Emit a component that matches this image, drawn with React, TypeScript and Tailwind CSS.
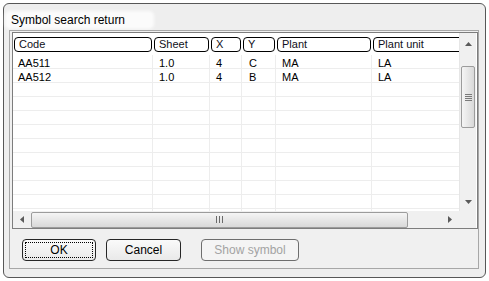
const columns = [
  { title: "Code", width: "w-[140px]", pad: "pl-[5px]" },
  { title: "Sheet", width: "w-[57px]", pad: "pl-[6px]" },
  { title: "X", width: "w-[32px]", pad: "pl-[6px]" },
  { title: "Y", width: "w-[34px]", pad: "pl-[7px]" },
  { title: "Plant", width: "w-[96px]", pad: "pl-[6px]" },
  { title: "Plant unit", width: "w-[110px]", pad: "pl-[6px]" },
];

const rows = [
  ["AA511", "1.0", "4", "C", "MA", "LA"],
  ["AA512", "1.0", "4", "B", "MA", "LA"],
  ["", "", "", "", "", ""],
  ["", "", "", "", "", ""],
  ["", "", "", "", "", ""],
  ["", "", "", "", "", ""],
  ["", "", "", "", "", ""],
  ["", "", "", "", "", ""],
  ["", "", "", "", "", ""],
  ["", "", "", "", "", ""],
  ["", "", "", "", "", ""],
  ["", "", "", "", "", ""],
];

function Arrow({ dir }: { dir: "up" | "down" | "left" | "right" }) {
  const pts = {
    up: "0,4 7,4 3.5,0",
    down: "0,0 7,0 3.5,4",
    left: "4,0 4,7 0,3.5",
    right: "0,0 0,7 4,3.5",
  }[dir];
  const vertical = dir === "up" || dir === "down";
  return (
    <svg width={vertical ? 7 : 4} height={vertical ? 4 : 7} viewBox={vertical ? "0 0 7 4" : "0 0 4 7"}>
      <polygon points={pts} fill="#5a5a5a" />
    </svg>
  );
}

function Button({ label, width, focused, disabled }: { label: string; width: string; focused?: boolean; disabled?: boolean }) {
  return (
    <div
      className={`${width} h-[22px] rounded-[4px] border p-[2px] ${
        disabled
          ? "border-[#6e6e6e] bg-[#f4f4f4] text-[#a3a3a3]"
          : "border-[#262626] bg-gradient-to-b from-[#fafafa] to-[#e9e9e9] text-black"
      }`}
    >
      <div
        className={`h-full flex items-center justify-center text-[12px] leading-[14px] ${
          focused ? "border border-dotted border-black" : ""
        }`}
      >
        {label}
      </div>
    </div>
  );
}

export default function App() {
  return (
    <div className="w-[489px] h-[281px] bg-white p-[3px] font-['Liberation_Sans',Arial,sans-serif]">
      <div className="h-[275px] rounded-[6px] border border-[#575757] bg-[#eeeeee] flex flex-col">
        {/* title */}
        <div className="h-[26px] pt-[9px] pl-[3px]">
          <div className="w-[145px] h-[14px] pl-[4px] bg-[#fbfbfb] rounded-[3px] shadow-[0_0_3px_2px_#fbfbfb] text-[12px] leading-[14px] text-black">
            Symbol search return
          </div>
        </div>

        {/* client area */}
        <div className="h-[239px] ml-[5px] mr-[6px] border border-[#a7a7a7] bg-[#f0f0f0] pl-[2px] pt-[1px] flex flex-col">
          {/* list */}
          <div className="h-[197px] border border-[#7d7d7d] bg-white flex flex-col">
            <div className="flex h-[178px]">
              <div className="w-[446px] overflow-hidden">
                <div className="flex h-[22px]">
                  {columns.map((c) => (
                    <div key={c.title} className={`${c.width} shrink-0 px-[1px] pt-[4px]`}>
                      <div className="h-[15px] rounded-[4px] border border-black bg-white pl-[4px] text-[11px] leading-[13px] text-[#101020] whitespace-nowrap overflow-hidden">
                        {c.title}
                      </div>
                    </div>
                  ))}
                </div>
                {rows.map((r, i) => (
                  <div key={i} className="flex h-[14px] border-b border-[#ededed]">
                    {r.map((v, j) => (
                      <div
                        key={j}
                        className={`${columns[j].width} ${columns[j].pad} shrink-0 border-r border-[#ededed] pt-[2px] text-[11px] leading-[12px] text-black`}
                      >
                        {v}
                      </div>
                    ))}
                  </div>
                ))}
              </div>
              {/* vertical scrollbar */}
              <div className="w-[17px] bg-[#f0f0f0] border-l border-[#e6e6e6] flex flex-col items-center">
                <div className="h-[17px] flex items-center justify-center pt-[5px]">
                  <Arrow dir="up" />
                </div>
                <div className="h-[16px]" />
                <div className="w-[14px] h-[62px] rounded-[2px] border border-[#9c9c9c] bg-gradient-to-r from-[#f5f5f5] to-[#d9d9d9] flex flex-col items-center justify-center gap-[1px]">
                  <div className="w-[7px] h-[1px] bg-[#7a7a7a]" />
                  <div className="w-[7px] h-[1px] bg-[#7a7a7a]" />
                  <div className="w-[7px] h-[1px] bg-[#7a7a7a]" />
                  <div className="w-[7px] h-[1px] bg-[#7a7a7a]" />
                </div>
                <div className="flex-1" />
                <div className="h-[17px] flex items-center justify-center pb-[1px]">
                  <Arrow dir="down" />
                </div>
              </div>
            </div>
            {/* horizontal scrollbar */}
            <div className="flex h-[17px]">
              <div className="w-[446px] bg-[#f0f0f0] flex items-center">
                <div className="w-[18px] flex justify-center">
                  <Arrow dir="left" />
                </div>
                <div className="w-[377px] h-[16px] rounded-[2px] border border-[#9c9c9c] bg-gradient-to-b from-[#f5f5f5] to-[#d9d9d9] flex items-center justify-center gap-[2px]">
                  <div className="w-[1px] h-[7px] bg-[#6a6a6a]" />
                  <div className="w-[1px] h-[7px] bg-[#6a6a6a]" />
                  <div className="w-[1px] h-[7px] bg-[#6a6a6a]" />
                </div>
                <div className="flex-1 flex justify-center pl-[32px]">
                  <Arrow dir="right" />
                </div>
              </div>
              <div className="w-[17px] bg-[#f0f0f0]" />
            </div>
          </div>

          {/* buttons */}
          <div className="flex mt-[10px] ml-[10px]">
            <Button label="OK" width="w-[74px]" focused />
            <div className="ml-[10px]">
              <Button label="Cancel" width="w-[75px]" />
            </div>
            <div className="ml-[20px]">
              <Button label="Show symbol" width="w-[98px]" disabled />
            </div>
          </div>
        </div>
      </div>
    </div>
  );
}
